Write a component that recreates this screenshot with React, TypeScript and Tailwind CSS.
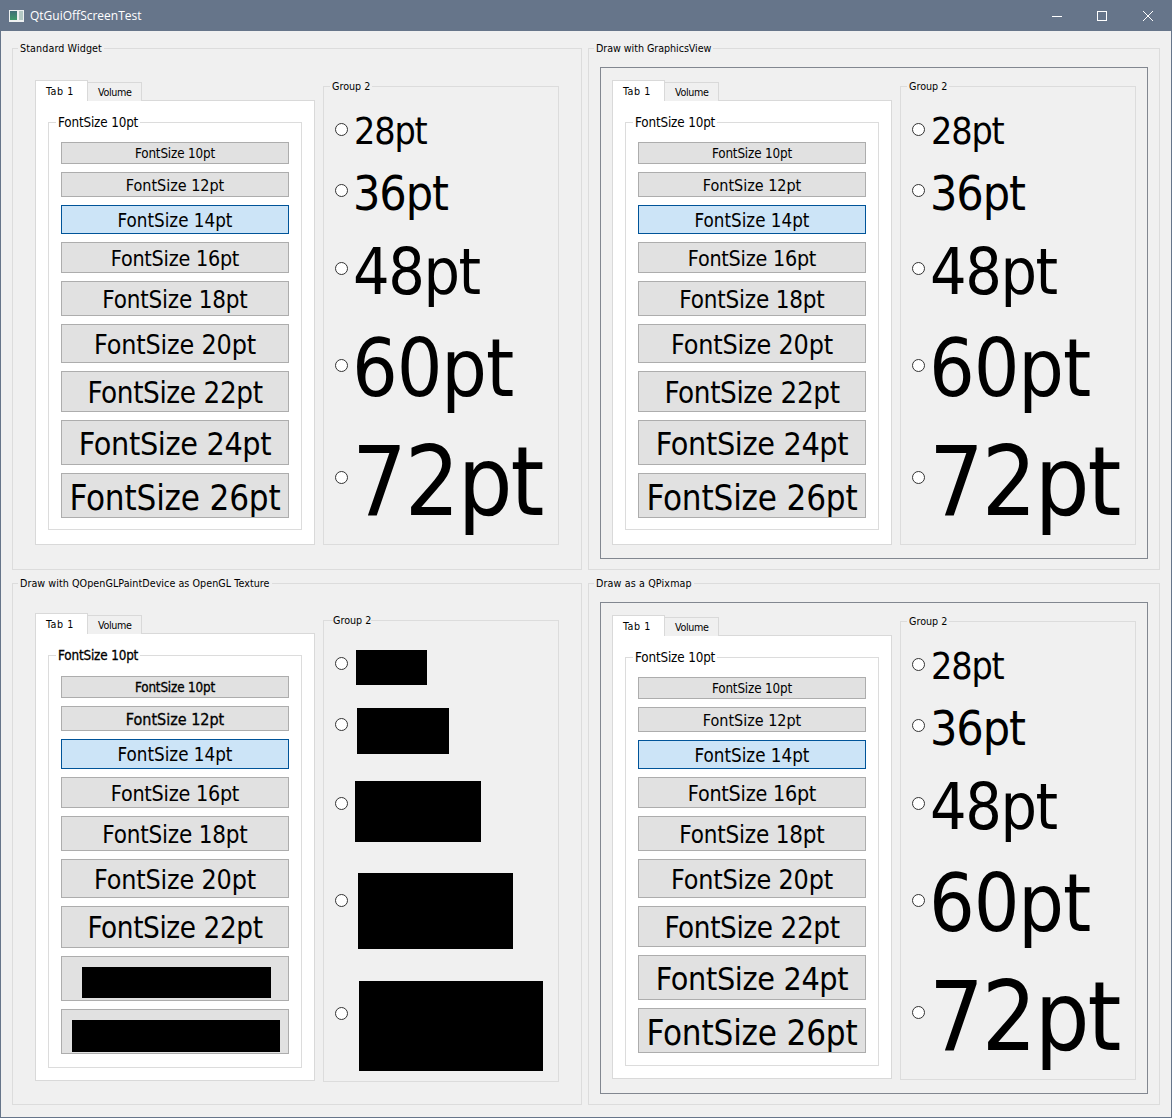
const btnText = [
  'text-[13.33px] tracking-[-0.011em] pt-[2px]',
  'text-[16px] pt-[2px]',
  'text-[18.67px] pt-[2px]',
  'text-[21.33px] tracking-[-0.011em] pt-[2px]',
  'text-[24px] tracking-[-0.008em] pt-[2px]',
  'text-[26.67px] tracking-[-0.006em] pt-[2px]',
  'text-[29.33px] tracking-[-0.014em] pt-[4px]',
  'text-[32px] tracking-[-0.011em] pt-[2px]',
  'text-[34.67px] tracking-[-0.005em] pt-[4px]',
];
const labels = ['10', '12', '14', '16', '18', '20', '22', '24', '26'];

const rowsBase = [
  { label: '28pt', text: 'text-[37.33px] tracking-[-0.031em] pt-[6px] ml-[6px]', h: 'h-[44px]', mt: '' },
  { label: '36pt', text: 'text-[48px] tracking-[-0.024em] pt-[6px] ml-[5px]', h: 'h-[58px]', mt: 'mt-[10px]' },
  { label: '48pt', text: 'text-[64px] tracking-[-0.022em] pt-[8px] ml-[5px]', h: 'h-[78px]', mt: 'mt-[10px]' },
  { label: '60pt', text: 'text-[80px] tracking-[-0.014em] pt-[8px] ml-[4px]', h: 'h-[96px]', mt: 'mt-[10px]' },
  { label: '72pt', text: 'text-[96px] tracking-[-0.022em] pt-[10px] ml-[4px]', h: 'h-[116px]', mt: 'mt-[6px]' },
];

const rowsGl = [
  { ...rowsBase[0], block: 'w-[71px] h-[35px] ml-[8px] translate-y-[4px]' },
  { ...rowsBase[1], block: 'w-[92px] h-[46px] ml-[9px] translate-y-[7px]' },
  { ...rowsBase[2], mt: 'mt-[11px]', block: 'w-[126px] h-[61px] ml-[7px] translate-y-[8px]' },
  { ...rowsBase[3], block: 'w-[155px] h-[76px] ml-[10px] translate-y-[11px]' },
  { ...rowsBase[4], mt: 'mt-[7px]', block: 'w-[184px] h-[90px] ml-[11px] translate-y-[13px]' },
];

const font = "font-['DejaVu_Sans_Condensed','DejaVu_Sans',sans-serif]";
const small = 'text-[10.67px] bg-[#f0f0f0]';

function Legend({ children, className }: { children: React.ReactNode; className: string }) {
  return <span className={`absolute leading-none whitespace-nowrap ${className}`}>{children}</span>;
}

function Buttons({ heights, gl }: { heights: string[]; gl?: boolean }) {
  return (
    <div className="flex flex-col gap-2">
      {heights.map((h, i) => {
        const selected = i === 2;
        const hidden = gl && i >= 7;
        return (
          <div
            key={labels[i]}
            className={`${h} flex items-center justify-center border ${hidden ? '' : btnText[i]} ${
              selected ? 'bg-[#cce4f7] border-[#005499]' : 'bg-[#e1e1e1] border-[#adadad]'
            } ${gl && i < 2 ? '[-webkit-text-stroke:0.3px_black]' : ''}`}
          >
            {hidden ? (
              <div className={i === 7 ? 'w-[189px] h-[31px] bg-black translate-x-[1px] translate-y-[4px]' : 'w-[208px] h-[32px] bg-black translate-x-[1px] translate-y-[4px]'} />
            ) : (
              `FontSize ${labels[i]}pt`
            )}
          </div>
        );
      })}
    </div>
  );
}

function Radio() {
  return <div className="w-[13px] h-[13px] shrink-0 rounded-full border border-[#333] bg-white" />;
}

function TabWidget({ pane, inner, innerPt, heights, gl }: { pane: string; inner: string; innerPt: string; heights: string[]; gl?: boolean }) {
  return (
    <div className="w-[280px] shrink-0">
      <div className="flex items-end h-[21px] text-[10.67px]">
        <div className="relative z-10 w-[53px] h-[21px] bg-white border border-b-0 border-[#d9d9d9] pl-[10px] pt-[2px] flex items-center tracking-[0.05em]">Tab 1</div>
        <div className="w-[55px] h-[19px] -ml-px bg-[#f0f0f0] border border-b-0 border-[#d9d9d9] pl-[10px] pt-[2px] flex items-center tracking-[-0.03em]">Volume</div>
      </div>
      <div className={`${pane} -mt-px bg-white border border-[#d9d9d9] px-3 pt-[21px]`}>
        <div className={`${inner} ${innerPt} relative w-[254px] border border-[#dcdcdc] px-3`}>
          <Legend className={`left-[7px] -top-[7px] px-[2px] text-[13.33px] tracking-[-0.011em] bg-white ${gl ? '[-webkit-text-stroke:0.3px_black]' : ''}`}>FontSize 10pt</Legend>
          <Buttons heights={heights} gl={gl} />
        </div>
      </div>
    </div>
  );
}

function GroupTwo({ rows, top, gl }: { rows: typeof rowsGl | typeof rowsBase; top: string; gl?: boolean }) {
  return (
    <div className={`${top} relative w-[236px] shrink-0 border border-[#dcdcdc] pl-[11px] pt-[20px]`}>
      {gl ? (
        <Legend className="left-[9px] -top-[5px] text-[10.67px]">
          <span className="bg-[#f0f0f0] pl-[3px] -ml-[3px] [clip-path:inset(0_0_0_3px)]">Group 2</span>
        </Legend>
      ) : (
        <Legend className="left-[6px] -top-[5px] px-[2px] text-[10.67px] bg-[#f0f0f0]">Group 2</Legend>
      )}
      {rows.map((r) => (
        <div key={r.label} className={`${r.h} ${r.mt} flex items-center`}>
          <Radio />
          {gl && 'block' in r ? (
            <div className={`${r.block} bg-black shrink-0`} />
          ) : (
            <span className={`${r.text} leading-none whitespace-nowrap`}>{r.label}</span>
          )}
        </div>
      ))}
    </div>
  );
}

const hTop = ['h-[22px]', 'h-[25px]', 'h-[29px]', 'h-[31px]', 'h-[35px]', 'h-[39px]', 'h-[41px]', 'h-[45px]', 'h-[45px]'];
const hGl = ['h-[22px]', 'h-[25px]', 'h-[30px]', 'h-[31px]', 'h-[35px]', 'h-[39px]', 'h-[42px]', 'h-[45px]', 'h-[45px]'];

export default function App() {
  return (
    <div className={`${font} relative w-[1172px] h-[1118px] bg-[#f0f0f0] text-black border-x border-b border-[#66758a] flex flex-col`}>
      {/* Заголовок окна */}
      <div className="h-[31px] -mx-px bg-[#66758a] shrink-0 flex items-center pl-[9px] text-white">
        <svg width="15" height="12" viewBox="0 0 15 12" className="shrink-0">
          <defs>
            <linearGradient id="icon-left" x1="0" y1="0" x2="0" y2="1">
              <stop offset="0" stopColor="#3f6f78" />
              <stop offset="1" stopColor="#3f9a6a" />
            </linearGradient>
          </defs>
          <rect width="15" height="12" fill="#eef1f1" />
          <rect x="1" y="1" width="7" height="9" fill="url(#icon-left)" />
          <rect x="10" y="1" width="4" height="9" fill="#b4c9c4" />
        </svg>
        <span className="ml-[6px] font-['Open_Sans',sans-serif] text-[12px]">QtGuiOffScreenTest</span>
        <div className="ml-auto flex items-center">
          <svg width="46" height="30" viewBox="0 0 46 30"><path d="M18 15.5h10" stroke="#fff" fill="none" /></svg>
          <svg width="46" height="30" viewBox="0 0 46 30"><rect x="17.5" y="10.5" width="9" height="9" stroke="#fff" fill="none" /></svg>
          <svg width="46" height="30" viewBox="0 0 46 30"><path d="M17 10l10 10M27 10L17 20" stroke="#fff" fill="none" /></svg>
        </div>
      </div>

      <div className="grid grid-cols-[570px_572px] grid-rows-[522px_522px] gap-x-[6px] gap-y-[13px] pl-[11px] pt-[17px]">
        {/* Обычные виджеты */}
        <div className="relative border border-[#dcdcdc] pl-[22px] pt-[31px]">
          <Legend className={`left-[5px] -top-[5px] px-[2px] tracking-[0.01em] ${small}`}>Standard Widget</Legend>
          <div className="flex gap-2 items-start">
            <TabWidget pane="h-[445px]" inner="h-[408px]" innerPt="pt-[19px]" heights={hTop} />
            <div className="pt-[6px]">
              <GroupTwo rows={rowsBase} top="h-[459px]" />
            </div>
          </div>
        </div>

        <div className="relative border border-[#dcdcdc] pl-[11px] pt-[18px]">
          <Legend className={`left-[5px] -top-[5px] px-[2px] tracking-[-0.005em] ${small}`}>Draw with GraphicsView</Legend>
          <div className="w-[548px] h-[492px] border border-[#828790] pl-[11px] pt-[12px]">
            <div className="flex gap-2 items-start">
              <TabWidget pane="h-[445px]" inner="h-[408px]" innerPt="pt-[19px]" heights={hTop} />
              <div className="pt-[6px]">
                <GroupTwo rows={rowsBase} top="h-[459px]" />
              </div>
            </div>
          </div>
        </div>

        <div className="relative border border-[#dcdcdc] pl-[22px] pt-[29px]">
          <Legend className={`left-[5px] -top-[5px] px-[2px] tracking-[0.005em] ${small}`}>Draw with QOpenGLPaintDevice as OpenGL Texture</Legend>
          <div className="flex gap-2 items-start">
            <TabWidget pane="h-[448px]" inner="h-[413px]" innerPt="pt-[20px]" heights={hGl} gl />
            <div className="pt-[7px]">
              <GroupTwo rows={rowsGl} top="h-[462px]" gl />
            </div>
          </div>
        </div>

        <div className="relative border border-[#dcdcdc] pl-[11px] pt-[18px]">
          <Legend className={`left-[5px] -top-[5px] px-[2px] tracking-[0.012em] ${small}`}>Draw as a QPixmap</Legend>
          <div className="w-[548px] h-[492px] border border-[#828790] pl-[11px] pt-[12px]">
            <div className="flex gap-2 items-start">
              <TabWidget pane="h-[444px]" inner="h-[409px]" innerPt="pt-[19px]" heights={hTop} />
              <div className="pt-[6px]">
                <GroupTwo rows={rowsBase} top="h-[459px]" />
              </div>
            </div>
          </div>
        </div>
      </div>
    </div>
  );
}
